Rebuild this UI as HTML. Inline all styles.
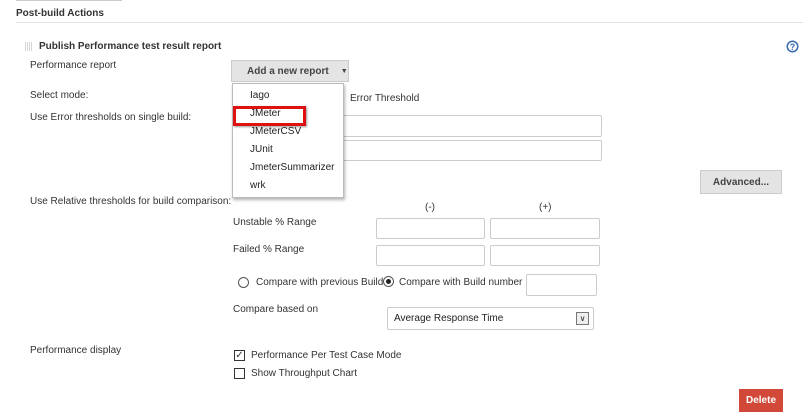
<!DOCTYPE html>
<html><head><style>
body{margin:0;width:803px;height:414px;background:#fff;font-family:"Liberation Sans",Arial,sans-serif;font-size:10px;color:#333;position:relative;overflow:hidden}
.a{position:absolute;white-space:nowrap}
.b{font-weight:bold}
.in{position:absolute;border:1px solid #ccc;border-radius:2px;background:#fff;box-sizing:border-box}
.dd{line-height:18px}
</style></head><body>
<div class="a" style="left:16px;top:0;width:106px;height:1px;background:#ccc"></div>
<div class="a b" style="left:16px;top:8px">Post-build Actions</div>
<div class="a" style="left:16px;top:22px;width:787px;height:1px;background:#e2e2e2"></div>
<div class="a" style="left:25px;top:42px;width:8px;height:9px;background:repeating-linear-gradient(90deg,#ccc 0 1px,#fff 1px 2px),#fff;opacity:.8"></div>
<div class="a b" style="left:39px;top:41px">Publish Performance test result report</div>
<svg class="a" style="left:786px;top:40px" width="13" height="13"><circle cx="6.5" cy="6.5" r="6" fill="#3a6ab0"/><circle cx="6.5" cy="6.5" r="4.5" fill="#fff"/><text x="6.5" y="10" font-size="9" font-weight="bold" fill="#3a6ab0" text-anchor="middle" font-family="Liberation Sans">?</text></svg>
<div class="a" style="left:30px;top:60px">Performance report</div>
<div class="a b" style="left:231px;top:60px;width:118px;height:22px;background:#e4e4e4;border:1px solid #ccc;box-sizing:border-box;color:#444;display:flex;align-items:center"><span style="margin-left:15px">Add a new report</span><span style="margin-left:12px;font-size:7px">▼</span></div>
<div class="a" style="left:30px;top:90px">Select mode:</div>
<div class="a" style="left:350px;top:93px">Error Threshold</div>
<div class="a" style="left:30px;top:112px">Use Error thresholds on single build:</div>
<div class="in" style="left:342px;top:115px;width:260px;height:22px"></div>
<div class="in" style="left:342px;top:140px;width:260px;height:21px"></div>
<div class="a" style="left:305px;top:107px;width:36px;height:11px;border:1px dotted #555;border-left:none"></div>
<div class="a" style="left:232px;top:83px;width:112px;height:115px;background:#fff;border:1px solid #bbb;box-sizing:border-box;box-shadow:1px 2px 3px rgba(0,0,0,.3);color:#222">
<div class="a dd" style="left:17px;top:3px">Iago</div>
<div class="a dd" style="left:17px;top:21px">JMeter</div>
<div class="a dd" style="left:17px;top:39px">JMeterCSV</div>
<div class="a dd" style="left:17px;top:57px">JUnit</div>
<div class="a dd" style="left:17px;top:75px">JmeterSummarizer</div>
<div class="a dd" style="left:17px;top:93px">wrk</div>
</div>
<div class="a" style="left:233px;top:106px;width:73px;height:20px;border:3px solid #e01010;box-sizing:border-box;box-shadow:1px 1px 2px rgba(0,0,0,.4)"></div>
<div class="a b" style="left:700px;top:170px;width:82px;height:24px;background:#e4e4e4;border:1px solid #ccc;box-sizing:border-box;display:flex;align-items:center;justify-content:center;color:#444">Advanced...</div>
<div class="a" style="left:30px;top:196px">Use Relative thresholds for build comparison:</div>
<div class="a" style="left:425px;top:202px">(-)</div>
<div class="a" style="left:539px;top:202px">(+)</div>
<div class="a" style="left:233px;top:217px">Unstable % Range</div>
<div class="in" style="left:376px;top:218px;width:109px;height:21px"></div>
<div class="in" style="left:490px;top:218px;width:110px;height:21px"></div>
<div class="a" style="left:233px;top:244px">Failed % Range</div>
<div class="in" style="left:376px;top:245px;width:109px;height:21px"></div>
<div class="in" style="left:490px;top:245px;width:110px;height:21px"></div>
<div class="a" style="left:238px;top:277px;width:9px;height:9px;border:1px solid #555;border-radius:50%"></div>
<div class="a" style="left:256px;top:277px">Compare with previous Build</div>
<div class="a" style="left:383px;top:276px;width:9px;height:9px;border:1px solid #555;border-radius:50%"><div style="margin:2px;width:5px;height:5px;border-radius:50%;background:#222"></div></div>
<div class="a" style="left:399px;top:277px">Compare with Build number</div>
<div class="in" style="left:526px;top:274px;width:71px;height:22px"></div>
<div class="a" style="left:233px;top:304px">Compare based on</div>
<div class="in" style="left:387px;top:307px;width:207px;height:23px;line-height:21px;padding-left:6px;color:#222">Average Response Time<div class="a" style="left:188px;top:4px;width:11px;height:11px;border:1px solid #777;background:#eee;font-size:8px;line-height:11px;text-align:center">∨</div></div>
<div class="a" style="left:30px;top:345px">Performance display</div>
<div class="a" style="left:234px;top:350px;width:9px;height:9px;border:1px solid #333;font-size:10px;line-height:9px;text-align:center">✓</div>
<div class="a" style="left:251px;top:350px">Performance Per Test Case Mode</div>
<div class="a" style="left:234px;top:368px;width:9px;height:9px;border:1px solid #333"></div>
<div class="a" style="left:251px;top:368px">Show Throughput Chart</div>
<div class="a b" style="left:739px;top:389px;width:44px;height:23px;background:#d24939;color:#fff;display:flex;align-items:center;justify-content:center">Delete</div>
</body></html>
